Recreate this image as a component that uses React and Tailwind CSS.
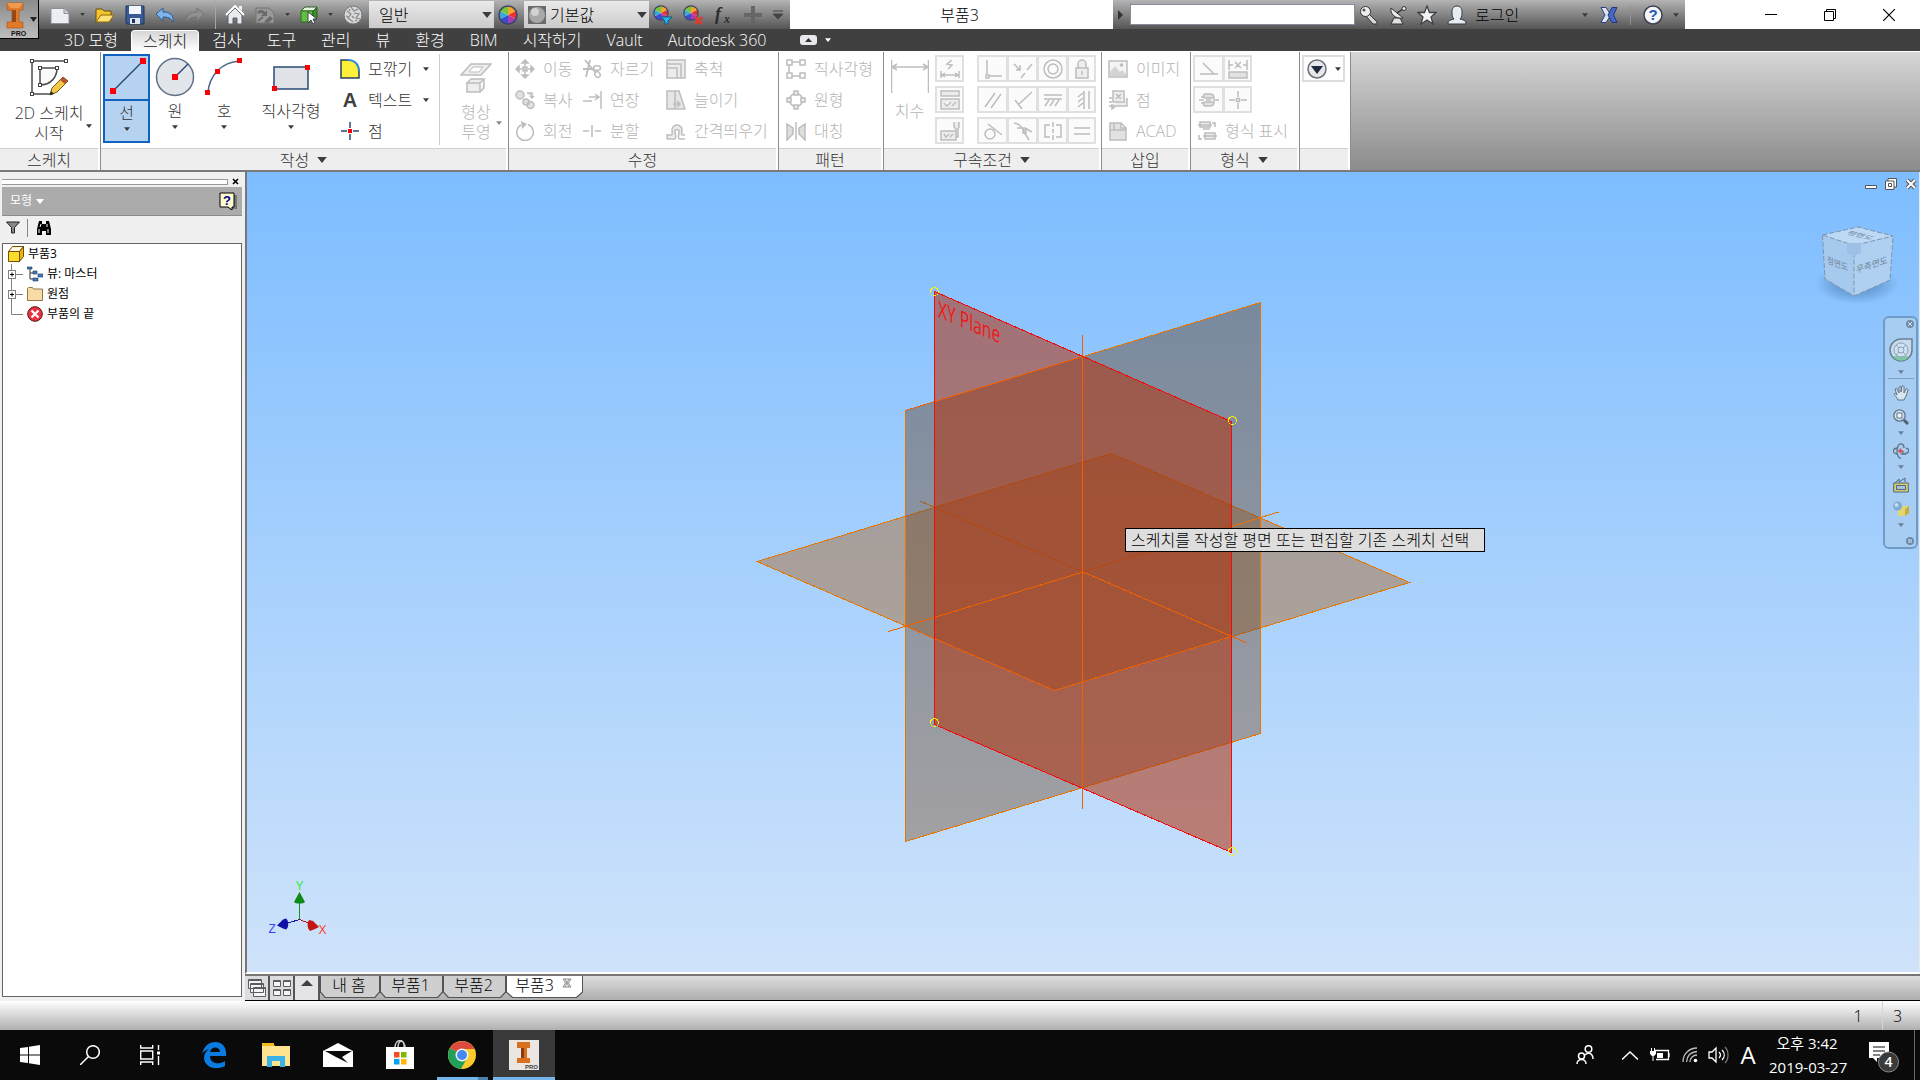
import React from 'react';

const Svg = ({ w = 20, h = w, box, className = '', children }) => (
  <svg width={w} height={h} viewBox={box || `0 0 ${w} ${h}`} fill="none" className={`shrink-0 ${className}`} aria-hidden="true">
    {children}
  </svg>
);

const Caret = ({ w = 6, color = '#3c3c3c', className = '' }) => (
  <Svg w={w} h={Math.ceil(w * 0.6)} box="0 0 8 5" className={className}>
    <path d="M0 0h8L4 5z" fill={color} />
  </Svg>
);

/* ---------- title bar icons ---------- */

const NewIcon = () => (
  <Svg>
    <path d="M1 3.500h13l5 5v10H1z" fill="#eceef1" stroke="#8c9097" />
    <path d="M14 3.500v5h5" fill="#cfd3d8" stroke="#8c9097" />
  </Svg>
);

const OpenIcon = () => (
  <Svg>
    <path d="M1 17V4h6l2 2h7v4" fill="#f4c430" stroke="#6b4e00" />
    <path d="M1 17l5-7h13l-5 7z" fill="#ffe178" stroke="#8a6700" />
  </Svg>
);

const SaveIcon = () => (
  <Svg>
    <path d="M1 1h18v18H2l-1-1z" fill="#3a5a94" stroke="#1e345e" />
    <path d="M4 1h12v8H4z" fill="#f3f6fa" />
    <path d="M5 13h10v6H5z" fill="#dfe4ea" />
    <path d="M7 14h3v4H7z" fill="#1e345e" />
  </Svg>
);

const UndoIcon = () => (
  <Svg>
    <path d="M1 9l7-6v4c7 0 11 3 10 10-2-4-5-5-10-5v4z" fill="#7db4ea" stroke="#2a5a98" />
  </Svg>
);

const RedoIcon = () => (
  <Svg>
    <path d="M19 9l-7-6v4C5 7 1 10 2 17c2-4 5-5 10-5v4z" fill="#8f8f8f" stroke="#747474" />
  </Svg>
);

const HomeIcon = () => (
  <Svg>
    <path d="M3 10v9h5v-6h4v6h5v-9l-7-7z" fill="#e8eaee" stroke="#5a5f68" />
    <path d="M1 10l9-9 9 9" stroke="#fff" strokeWidth="2" />
    <path d="M14 1h3v5l-3-3z" fill="#f3f3f3" />
  </Svg>
);

const UpdateIcon = () => (
  <Svg>
    <path d="M1 3h13l5 5v10H1z" fill="#9a9a9a" stroke="#727272" />
    <path d="M2 7a5 5 0 0 1 8 0l2-2v6H6l2-2a3 3 0 0 0-4 0zM9 17l6-6 3 3-5 4z" fill="#6a6a6a" />
    <path d="M3 16l5-4" stroke="#6a6a6a" strokeWidth="2" />
  </Svg>
);

const PickIcon = () => (
  <Svg w={18} h={20}>
    <path d="M1 6l4-4h12l-4 4z" fill="#e4f5df" stroke="#2d5c20" />
    <path d="M1 6h12v11H1z" fill="#62bf3f" stroke="#2d6b1c" />
    <path d="M13 6l4-4v11l-4 4z" fill="#3d8f24" stroke="#2d5c20" />
    <path d="M8 7v11l3-3 2 4 2-1-2-4h4z" fill="#fff" stroke="#3a3f55" />
  </Svg>
);

const SphereIcon = () => (
  <Svg>
    <circle cx="10" cy="10" r="9" fill="#d5d7d9" stroke="#777" />
    <path d="M4 6l4 3-3 4 5 4M8 2l3 4 4-2M11 8l5 1-3 4 4 1M9 11l2 2M3 11l2 1M12 16l2-1M6 4l1 2" stroke="#85888c" strokeWidth="1.200" />
  </Svg>
);

const Wheel = () => (
  <>
    <circle cx="10" cy="10" r="9" fill="#fff" />
    <path d="M10 10V1a9 9 0 0 1 8 5z" fill="#f6a52a" />
    <path d="M10 10l8-4a9 9 0 0 1 0 8z" fill="#e5352c" />
    <path d="M10 10l8 4a9 9 0 0 1-8 5z" fill="#a93bb5" />
    <path d="M10 10v9a9 9 0 0 1-8-5z" fill="#3a4fd0" />
    <path d="M10 10l-8 4a9 9 0 0 1 0-8z" fill="#37a8d8" />
    <path d="M10 10L2 6a9 9 0 0 1 8-5z" fill="#74c63c" />
    <circle cx="10" cy="10" r="9" stroke="#3a4468" strokeWidth="1.500" />
  </>
);

const WheelIcon = ({ badge }) => (
  <Svg>
    {badge ? <g transform="scale(.8)"><Wheel /></g> : <Wheel />}
    {badge === 'filter' && <path d="M8 12h11l-4 4v3h-3v-3z" fill="#25b4ea" stroke="#0b5c84" />}
    {badge === 'clear' && <path d="M12 12l7 7m0-7l-7 7" stroke="#e23a2c" strokeWidth="2.500" />}
  </Svg>
);

const FxIcon = () => (
  <Svg>
    <text x="2" y="15" fontFamily="Liberation Serif, serif" fontStyle="italic" fontWeight="700" fontSize="18" fill="#2c2c2c">f</text>
    <text x="11" y="18" fontFamily="Liberation Serif, serif" fontStyle="italic" fontWeight="700" fontSize="12" fill="#2c2c2c">x</text>
  </Svg>
);

const PlusIcon = () => (
  <Svg>
    <path d="M8 1h4v7h7v4h-7v7H8v-7H1V8h7z" fill="#666" />
  </Svg>
);

const KeyIcon = () => (
  <Svg>
    <path d="M10 9l8 8v2h-4l-7-8z" fill="#d9d9d9" stroke="#333" />
    <circle cx="6.500" cy="6.500" r="5" fill="#eee" stroke="#333" />
    <circle cx="5" cy="5" r="1.500" fill="#555" />
  </Svg>
);

const DishIcon = () => (
  <Svg w={18} h={20}>
    <path d="M5 13l-3 6h12l-3-6z" fill="#e2e2e2" stroke="#333" />
    <path d="M2 3c-1 6 4 11 12 10z" fill="#ececec" stroke="#333" />
    <path d="M8 8l6-4" stroke="#333" strokeWidth="1.500" />
    <circle cx="15" cy="3.500" r="2" fill="#eee" stroke="#333" />
  </Svg>
);

const StarIcon = () => (
  <Svg>
    <path d="M10 1l2.500 6.500H19l-5 4.500 2 7-6-4-6 4 2-7-5-4.500h6.500z" fill="#f2f2f2" stroke="#3d4148" strokeWidth="1.300" />
  </Svg>
);

const UserIcon = () => (
  <Svg>
    <path d="M1 19c0-4 3-4 6-5-2-2-2-4-2-7 0-4 2-6 5-6s5 2 5 6c0 3 0 5-2 7 3 1 6 1 6 5z" fill="#e8ecf2" stroke="#333a48" />
  </Svg>
);

const ExchangeIcon = () => (
  <Svg w={18} h={18}>
    <path d="M1 1.500h5l5 7.500-5 7.500H1L5 9z" fill="#dfe5f4" stroke="#2c3f7c" />
    <path d="M17 1.500h-5L8 9l4 7.500h5L13.500 9z" fill="#4468c4" stroke="#22387c" />
  </Svg>
);

const HelpIcon = () => (
  <Svg>
    <circle cx="10" cy="10" r="9" fill="#f2f4f8" stroke="#3b4254" strokeWidth="1.500" />
    <text x="10" y="15" textAnchor="middle" fontFamily="Liberation Sans, sans-serif" fontWeight="700" fontSize="15" fill="#2456b8">?</text>
  </Svg>
);

/* ---------- ribbon icons ---------- */

const dot = '#fb0007';
const line = '#2b4a75';
const dim = '#bdbdbd';

const Sketch2DIcon = () => (
  <Svg w={40}>
    <path d="M3 37V4h35M3 37h18" stroke="#4c4c4c" strokeWidth="1.500" />
    <path d="M11 28V11h17c0 9-6 17-17 17z" stroke="#4c4c4c" strokeWidth="1.500" fill="#fafafa" />
    {[[3, 4], [37, 4], [3, 37], [11, 11], [28, 11], [11, 28]].map(([x, y]) => (
      <rect key={`${x}-${y}`} x={x - 1.5} y={y - 1.5} width="3" height="3" fill="#fff" stroke="#444" />
    ))}
    <path d="M21 38l2-7 11-11 5 4-11 11z" fill="#f7c948" stroke="#6b5524" />
    <path d="M31 23l3-3 5 4-3 3z" fill="#b5532c" />
    <path d="M21 38l1-4 3 3z" fill="#222" />
  </Svg>
);

const LineIcon = () => (
  <Svg w={40}>
    <path d="M6 35L35 6" stroke={line} strokeWidth="1.500" />
    <path d="M3 32h6v6H3zM33 2h6v6h-6z" fill={dot} />
  </Svg>
);

const CircleIcon = () => (
  <Svg w={40}>
    <circle cx="20" cy="20" r="18.500" fill="#e2e5e9" stroke="#5d7088" strokeWidth="1.500" />
    <path d="M20 20L33 7" stroke={line} strokeWidth="1.500" />
    <path d="M17 17h6v6h-6z" fill={dot} />
  </Svg>
);

const ArcIcon = () => (
  <Svg w={40}>
    <path d="M4 36C5 19 17 5 36 4" stroke="#4b6485" strokeWidth="1.500" />
    <path d="M1 33h5v5H1zM11 12h5v5h-5zM33 1h5v5h-5z" fill={dot} />
  </Svg>
);

const RectIcon = () => (
  <Svg w={40}>
    <rect x="3" y="10" width="34" height="22" fill="#dfe3e8" stroke={line} strokeWidth="1.500" />
    <path d="M1 29h5v5H1zM34 8h5v5h-5z" fill={dot} />
  </Svg>
);

const FilletIcon = () => (
  <Svg>
    <path d="M1 1h7c7 0 11 5 11 11v7H1z" fill="#fdf03a" />
    <path d="M8 1H1v18h18v-7" stroke="#27405e" strokeWidth="1.500" />
    <path d="M8 1c7 0 11 5 11 11" stroke="#2f8be0" strokeWidth="2" />
  </Svg>
);

const TextIcon = () => (
  <span className="w-5 text-center text-xl leading-6 font-bold text-[#3f3f3f] [font-family:'Liberation_Sans',sans-serif]" aria-hidden="true">A</span>
);

const PointIcon = () => (
  <Svg>
    <path d="M10 1v6m0 6v6M1 10h6m6 0h6" stroke={line} strokeWidth="1.500" />
    <path d="M8 8h4v4H8z" fill={dot} />
  </Svg>
);

const ProjectIcon = () => (
  <Svg w={32} h={32}>
    <path d="M1 13L11 2h20L21 13z" fill="#eee" stroke={dim} strokeWidth="1.500" />
    <path d="M9 10l4-5h10l-4 5z" fill="#fff" stroke={dim} />
    <path d="M7 21l4-4h13l-4 4zM7 21h13v9H7zM20 30l4-4v-9" fill="#eee" stroke={dim} strokeWidth="1.500" />
  </Svg>
);

const G = ({ d, fill = 'none', children }) => (
  <Svg>
    <path d={d} stroke={dim} strokeWidth="1.500" fill={fill} />
    {children}
  </Svg>
);

const icons = {
  move: <G d="M8 8h4v4H8zM10 2v5M10 13v5M2 10h5M13 10h5M7 4l3-3 3 3zM7 16l3 3 3-3zM4 7l-3 3 3 3zM16 7l3 3-3 3z" fill="#c9c9c9" />,
  copy: <G d="M1 5a4 4 0 1 0 8 0a4 4 0 1 0-8 0M8 12a3 3 0 1 0 6 0a3 3 0 1 0-6 0M12 15a3.500 3.500 0 1 0 7 0a3.500 3.500 0 1 0-7 0M12 3h5v5M15 6l2 2 2-2" fill="#e0e0e0" />,
  rotate: (
    <Svg>
      <path d="M6 4a8.300 8.300 0 1 0 7-.5" stroke={dim} strokeWidth="1.500" />
      <path d="M6 0l6 3-5 5z" fill={dim} />
    </Svg>
  ),
  trim: (
    <Svg>
      <path d="M1 10h10M3 1l10 12M8 1L4 18" stroke={dim} strokeWidth="1.800" />
      <ellipse cx="15.500" cy="15.500" rx="2.500" ry="3" transform="rotate(-35 15.500 15.500)" stroke={dim} strokeWidth="1.500" />
      <ellipse cx="15" cy="9" rx="3.500" ry="2.300" stroke={dim} strokeWidth="1.500" />
    </Svg>
  ),
  extend: <G d="M1 11h9M7 7h9M13 4l4 3-4 3M19 1v18" />,
  split: <G d="M1 10h6M10 4v12M13 10h6" />,
  scale: <G d="M1 1h18v18h-8V9H1zM1 9h10v10H1zM1 9V5h14v14" fill="#ececec" />,
  stretch: <G d="M1 1h8v18H1zM9 1h4l6 18H9M7 14h7M11 11l3 3-3 3" fill="#e6e6e6" />,
  offset: (
    <Svg>
      <path d="M1 18v-4h4c2 0 1-3 1-5a5 5 0 0 1 10 0c0 2-1 5 1 5h2" stroke={dim} strokeWidth="1.500" fill="#ececec" />
      <path d="M1 18h7c3 0 1-5 1-8 0-2 4-2 4 0 0 3-2 8 1 8h5" stroke={dim} strokeWidth="1.500" fill="#fff" />
    </Svg>
  ),
  rectPattern: <G d="M1 1h5v5H1zM14 1h5v5h-5zM1 14h5v5H1zM14 14h5v5h-5zM6 3h8M3 6v8M6 17h8" />,
  circPattern: (
    <Svg>
      <circle cx="10" cy="10" r="6.500" stroke={dim} strokeWidth="1.500" />
      <path d="M8 1h4v4H8zM8 15h4v4H8zM1 8h4v4H1zM15 8h4v4h-4z" fill="#eee" stroke={dim} strokeWidth="1.500" />
    </Svg>
  ),
  mirror: <G d="M10 1v18M1 3l6 4v6l-6 6zM19 3l-6 4v6l6 6z" fill="#dedede" />,
  autoDim: <G d="M1 12v7M19 12v7M2 16h16M5 14l-3 2 3 2M15 14l3 2-3 2M12 1L7 5l5 1-4 4" />,
  showCon: <G d="M1 1h18v5H1zM1 9h18v10H1zM4 13l3 3 4-4M12 16l4-4" fill="#ececec" />,
  conSet: <G d="M1 10h15v9H1zM4 13l2 3 3-3M10 16l3-3M14 1v5l2 2v8h2V8l1-2V1" fill="#ececec" />,
  perp: <G d="M4 1v14M6 17h13M3 16h3v3H3z" />,
  collinear: <G d="M1 5l6 6M7 6v5H3M8 19l4-5M14 11l5-6" />,
  concentric: <Svg><circle cx="10" cy="10" r="9" stroke={dim} strokeWidth="1.500" /><circle cx="10" cy="10" r="5" stroke={dim} strokeWidth="1.500" /></Svg>,
  lock: <G d="M4 9h12v10H4zM6 9V5a4 4 0 0 1 8 0v4M10 12v4" fill="#eee" />,
  parallel: <G d="M2 17L12 3M8 18L18 4" />,
  perpend: <G d="M2 10l7 9M6 14L19 2" />,
  horiz: <G d="M1 5h18M1 9h18M6 10l-4 6M11 10l-4 6M16 10l-4 6" />,
  vert: <G d="M12 1v18M17 1v18M11 3L6 7M11 8l-5 4M11 13l-5 4" />,
  tangent: <Svg><circle cx="7" cy="13" r="5" stroke={dim} strokeWidth="1.500" /><path d="M5 3l14 11" stroke={dim} strokeWidth="1.500" /></Svg>,
  smooth: <G d="M1 2c7 1 9 5 10 9l5 8M4 7h8l7 4M10 9h3v3h-3z" />,
  symmetric: <G d="M7 4H2v12h5M13 4h5v12h-5M10 1v5M10 8v4M10 14v5" />,
  equal: <G d="M2 7h16M2 13h16" />,
  image: (
    <Svg>
      <path d="M1 2h18v16H1z" fill="#f4f4f4" stroke={dim} strokeWidth="1.500" />
      <path d="M2 17v-4l5-6 5 6 2-2 4 4v2z" fill="#d4d4d4" />
      <circle cx="13.500" cy="6" r="1.800" fill={dim} />
    </Svg>
  ),
  points: <G d="M5 1h11v11H5zM8 4l5 5M13 4l-5 5M1 8h3M1 12h3M1 16h18V8M4 14v5l3-2" fill="#ededed" />,
  acad: <G d="M2 2h11l5 5v12H2zM13 2v5h5M2 9h16M6 3v6" fill="#e2e2e2" />,
  construction: <G d="M1 15h18M4 4l11 11" />,
  driven: <G d="M1 1v10M19 1v10M1 6h4M15 6h4M7 3l6 6M13 3L7 9M1 13h18v6H1z" fill="#e2e2e2" />,
  centerline: (
    <Svg>
      <path d="M6 8c-2 0-2-4 0-4h5c3 0 4 2 4 4zM6 12c-2 0-2 4 0 4h5c3 0 4-2 4-4z" fill="#e0e0e0" stroke={dim} strokeWidth="1.500" />
      <path d="M0 10h5M7 10h5M14 10h6M2 7h3M2 13h3" stroke={dim} strokeWidth="1.500" />
    </Svg>
  ),
  centerpoint: <G d="M10 1v6M10 13v6M1 10h6M13 10h6M8.500 8.500h3v3h-3z" />,
  showFormat: <G d="M3 1h10v5H3zM8 12h10v6H8zM1 4h14M6 15h14M15 2h3v4M2 14v4h3M6 8h7" fill="#ececec" />,
};

/* ---------- ribbon building blocks ---------- */

const Panel = ({ title, more, width, children }) => (
  <section className={`${width} flex flex-col border-r border-[#8c8c8c] bg-white`}>
    <div className="flex h-24 pt-px">{children}</div>
    <h2 className="mr-0.5 flex flex-1 items-center justify-center gap-2 border-t border-[#d0d0d0] bg-[#eee] text-base leading-5">
      {title}
      {more && <Caret w={10} />}
    </h2>
  </section>
);

const Large = ({ icon, label, className = '' }) => (
  <button type="button" className={`flex flex-col items-center pt-1 ${className}`}>
    {icon}
    <span className="mt-1 leading-5">{label}</span>
    <Caret className="mt-1" />
  </button>
);

const Small = ({ icon, label, caret, off = true }) => (
  <button type="button" className={`flex h-[31px] items-center gap-2 whitespace-nowrap leading-5 ${off ? 'text-[#b4b4b4]' : 'text-[#333]'}`}>
    {icon}
    <span>{label}</span>
    {caret && <Caret className="ml-auto" />}
  </button>
);

const IconGrid = ({ names, cols, label }) => (
  <div className={`grid ${cols} content-start gap-y-1 pt-0.5`} role="group" aria-label={label}>
    {names.map((name) => (
      <button key={name} type="button" aria-label={name} className="-mr-px flex h-[27px] items-center justify-center border-2 border-[#e0e0e0] bg-[#fbfbfb]">
        {icons[name]}
      </button>
    ))}
  </div>
);

const TitleBar = () => (
  <header className="flex h-[29px] bg-white">
    <div className="flex shrink-0 items-center bg-linear-to-b from-[#b4b4b4] via-[#858585] to-[#555] pr-[7px] pl-[50px]">
      <div className="flex items-center gap-2.5 pr-1.5">
        <button type="button" aria-label="새로 만들기"><NewIcon /></button>
        <Caret w={5} />
        <button type="button" aria-label="열기"><OpenIcon /></button>
        <button type="button" aria-label="저장"><SaveIcon /></button>
        <button type="button" aria-label="명령 취소"><UndoIcon /></button>
        <button type="button" aria-label="명령 복구"><RedoIcon /></button>
        <span className="-mr-px h-7 w-px bg-[#a5a5a5]" />
        <button type="button" aria-label="홈"><HomeIcon /></button>
        <button type="button" aria-label="업데이트"><UpdateIcon /></button>
        <Caret w={5} />
        <button type="button" aria-label="선택"><PickIcon /></button>
        <Caret w={5} />
        <button type="button" aria-label="재질"><SphereIcon /></button>
      </div>
      <div className="relative flex h-[27px] w-[125px] items-center bg-linear-to-b from-[#eaeaea] to-[#cacaca]">
        <select aria-label="재질" className="h-full w-full appearance-none pl-2.5 text-base text-black">
          <option>일반</option>
        </select>
        <Caret w={10} className="pointer-events-none absolute right-[2px]" />
      </div>
      <button type="button" aria-label="모양" className="mr-1.5 ml-1"><WheelIcon /></button>
      <div className="relative flex h-[27px] w-[125px] items-center bg-linear-to-b from-[#eaeaea] to-[#cacaca] pl-1">
        <Svg w={18}>
          <path d="M0 0h18v18H0z" fill="#6b6b6b" />
          <circle cx="9" cy="9" r="8" fill="#a8a8a8" />
          <circle cx="7" cy="6" r="4" fill="#d2d2d2" />
        </Svg>
        <select aria-label="모양" className="h-full w-full appearance-none pl-1 text-base text-black">
          <option>기본값</option>
        </select>
        <Caret w={10} className="pointer-events-none absolute right-[2px]" />
      </div>
      <div className="flex items-center gap-2.5 pl-1">
        <button type="button" aria-label="조정"><WheelIcon badge="filter" /></button>
        <button type="button" aria-label="지우기"><WheelIcon badge="clear" /></button>
        <button type="button" aria-label="매개변수"><FxIcon /></button>
        <button type="button" aria-label="추가"><PlusIcon /></button>
        <Svg w={10}>
          <path d="M0 1h10M0 4h10l-5 5z" stroke="#444" fill="#444" />
        </Svg>
      </div>
    </div>

    <h1 className="flex flex-1 items-center justify-center pl-4 text-base text-black">부품3</h1>

    <div className="flex w-[572px] shrink-0 items-center bg-linear-to-b from-[#b4b4b4] via-[#858585] to-[#555] pl-[5px]">
      <Svg w={6} h={10}><path d="M0 0v10l5-5z" fill="#333" /></Svg>
      <input type="text" aria-label="검색" className="mr-1 ml-1.5 h-[21px] w-[225px] border border-[#8b8ba0] bg-white px-1" />
      <div className="flex items-center gap-2.5">
        <button type="button" aria-label="키"><KeyIcon /></button>
        <button type="button" aria-label="통신 센터"><DishIcon /></button>
        <button type="button" aria-label="즐겨찾기"><StarIcon /></button>
        <button type="button" className="flex items-center gap-2 text-base text-black">
          <UserIcon />
          로그인
        </button>
      </div>
      <Caret className="ml-auto" />
      <button type="button" aria-label="교환" className="ml-3"><ExchangeIcon /></button>
      <span className="mx-3 h-5 w-px bg-[#8f8f8f]" />
      <button type="button" aria-label="도움말"><HelpIcon /></button>
      <Caret className="mr-1.5 ml-2.5" />
    </div>

    <div className="flex w-[235px] shrink-0 items-center justify-end pr-0.5">
      <button type="button" aria-label="최소화" className="flex w-[59px] justify-center">
        <Svg w={12}><path d="M0 5.500h12" stroke="#000" /></Svg>
      </button>
      <button type="button" aria-label="복원" className="flex w-[59px] justify-center">
        <Svg w={12}><path d="M.5 2.500h9v9h-9zM2.500 2V.5h9v9H10" stroke="#000" /></Svg>
      </button>
      <button type="button" aria-label="닫기" className="flex w-[59px] justify-center">
        <Svg w={12}><path d="M0 0l12 12M12 0L0 12" stroke="#000" strokeWidth="1.200" /></Svg>
      </button>
    </div>
  </header>
);

const menuTabs = ['3D 모형', '스케치', '검사', '도구', '관리', '뷰', '환경', 'BIM', '시작하기', 'Vault', 'Autodesk 360'];

const MenuTabs = () => (
  <nav className="flex h-[22px] gap-px bg-[#404040] pl-[52px] text-base text-white">
    {menuTabs.map((tab) => (
      <button
        key={tab}
        type="button"
        className={tab === '스케치'
          ? 'mt-px rounded-t-sm border border-b-0 border-white bg-linear-to-b from-[#d6d6d6] to-white px-[11px] leading-[18px] text-[#222]'
          : 'px-3 leading-5'}
      >
        {tab}
      </button>
    ))}
    <button type="button" aria-label="리본 최소화" className="ml-5 flex items-center gap-2">
      <Svg w={17} h={10}>
        <rect width="17" height="10" rx="3" fill="#e6e8ec" />
        <path d="M5 7h7L8.500 3z" fill="#333" />
      </Svg>
      <Caret color="#fff" />
    </button>
  </nav>
);

const Ribbon = () => (
  <div className="flex h-[121px] border-t border-b-2 border-t-white border-b-[#7a7a7a] bg-linear-to-b from-[#d6d6d6] to-[#8c8c8c] text-base text-[#333]">
    <Panel title="스케치" width="w-[101px]">
      <button type="button" className="relative flex flex-1 flex-col items-center pt-1 pr-0.5">
        <Sketch2DIcon />
        <span className="mt-1.5 block leading-5">2D 스케치</span>
        <span className="block leading-5">시작</span>
        <Caret className="absolute right-2 bottom-5" />
      </button>
    </Panel>

    <Panel title="작성" more width="w-[408px]">
      <button type="button" className="mt-px ml-0.5 flex h-[89px] w-[47px] flex-col items-center border-2 border-[#0f63bd] bg-[#b5d3f0]">
        <span className="flex h-[45px] w-full justify-center border-b-2 border-[#0f63bd]"><LineIcon /></span>
        <span className="mt-0.5 leading-5">선</span>
        <Caret className="mt-1" />
      </button>
      <Large icon={<CircleIcon />} label="원" className="w-[50px]" />
      <Large icon={<ArcIcon />} label="호" className="w-[48px]" />
      <Large icon={<RectIcon />} label="직사각형" className="w-[86px]" />
      <div className="ml-1.5 flex w-[89px] flex-col">
        <Small off={false} icon={<FilletIcon />} label="모깎기" caret />
        <Small off={false} icon={<TextIcon />} label="텍스트" caret />
        <Small off={false} icon={<PointIcon />} label="점" />
      </div>
      <div className="mt-px ml-2.5 flex h-[91px] flex-1 border-l border-[#ccc]">
        <button type="button" className="relative flex flex-1 flex-col items-center pt-2 pl-1 text-[#b4b4b4]">
          <ProjectIcon />
          <span className="mt-2 block leading-5">형상</span>
          <span className="block leading-5">투영</span>
          <Caret color="#8c8c8c" className="absolute right-1.5 bottom-5" />
        </button>
      </div>
    </Panel>

    <Panel title="수정" width="w-[270px]">
      <div className="grid grid-cols-[67px_84px_1fr] content-start pl-1.5">
        <Small icon={icons.move} label="이동" />
        <Small icon={icons.trim} label="자르기" />
        <Small icon={icons.scale} label="축척" />
        <Small icon={icons.copy} label="복사" />
        <Small icon={icons.extend} label="연장" />
        <Small icon={icons.stretch} label="늘이기" />
        <Small icon={icons.rotate} label="회전" />
        <Small icon={icons.split} label="분할" />
        <Small icon={icons.offset} label="간격띄우기" />
      </div>
    </Panel>

    <Panel title="패턴" width="w-[105px]">
      <div className="flex flex-col pl-[7px]">
        <Small icon={icons.rectPattern} label="직사각형" />
        <Small icon={icons.circPattern} label="원형" />
        <Small icon={icons.mirror} label="대칭" />
      </div>
    </Panel>

    <Panel title="구속조건" more width="w-[218px]">
      <button type="button" className="flex w-[51px] flex-col items-center pt-1.5 text-[#b4b4b4]">
        <Svg w={38} h={34}>
          <path d="M.5 1v33M37.500 1v33M1 8h36M6 5L1 8l5 3M32 5l5 3-5 3" stroke={dim} strokeWidth="1.500" />
        </Svg>
        <span className="mt-2 leading-5">치수</span>
      </button>
      <IconGrid label="구속조건 설정" cols="grid-cols-[28px]" names={['autoDim', 'showCon', 'conSet']} />
      <div className="w-3.5" />
      <IconGrid
        label="구속조건"
        cols="grid-cols-[30px_30px_30px_28px]"
        names={['perp', 'collinear', 'concentric', 'lock', 'parallel', 'perpend', 'horiz', 'vert', 'tangent', 'smooth', 'symmetric', 'equal']}
      />
    </Panel>

    <Panel title="삽입" width="w-[89px]">
      <div className="flex flex-col pl-1.5">
        <Small icon={icons.image} label="이미지" />
        <Small icon={icons.points} label="점" />
        <Small icon={icons.acad} label="ACAD" />
      </div>
    </Panel>

    <Panel title="형식" more width="w-[109px]">
      <div className="flex flex-col pl-0.5">
        <IconGrid label="형식" cols="grid-cols-[30px_28px]" names={['construction', 'driven', 'centerline', 'centerpoint']} />
        <div className="pt-0.5 pl-1"><Small icon={icons.showFormat} label="형식 표시" /></div>
      </div>
    </Panel>

    <Panel width="w-[51px]">
      <button type="button" aria-label="마무리" className="mt-0.5 ml-0.5 flex h-[27px] w-[43px] items-center justify-center gap-2 border-2 border-[#ddd]">
        <Svg w={20}>
          <circle cx="10" cy="10" r="9" fill="#e6e8eb" stroke="#6c7077" strokeWidth="1.500" />
          <path d="M4 7h12l-6 8z" fill="#202a3c" />
        </Svg>
        <Caret />
      </button>
    </Panel>
  </div>
);

/* ---------- model browser ---------- */

const treeItems = [
  {
    label: '뷰: 마스터',
    expandable: true,
    icon: (
      <Svg w={16}>
        <path d="M3 3v10h3M3 7h4" stroke="#333" />
        <path d="M0 1h5v2H0zM6 5h4v3H6zM11 8h5v3h-5zM6 12h5v3H6z" fill="#3f7fc0" stroke="#1c3450" strokeWidth=".6" />
      </Svg>
    ),
  },
  {
    label: '원점',
    expandable: true,
    icon: (
      <Svg w={16}>
        <path d="M.5 14.500V2.500l1-1h4l1 1.500h9v11.500z" fill="#f7dca6" stroke="#94744a" />
      </Svg>
    ),
  },
  {
    label: '부품의 끝',
    icon: (
      <Svg w={16}>
        <circle cx="8" cy="8" r="7.300" fill="#ec3340" stroke="#4e1216" />
        <path d="M4.500 4.500l7 7m0-7l-7 7" stroke="#fff" strokeWidth="2.200" />
      </Svg>
    ),
  },
];

const ModelBrowser = () => (
  <aside className="flex w-[245px] shrink-0 flex-col bg-[#f0f0f0] pt-1 pr-[3px] pb-1 pl-0.5 text-xs font-normal text-black">
    <div className="flex h-[11px] items-center gap-1">
      <span className="h-1.5 w-[226px] border-y border-r border-[#999] bg-white" />
      <button type="button" aria-label="패널 닫기">
        <Svg w={7}><path d="M1 1l5 5M6 1L1 6" stroke="#000" strokeWidth="1.600" /></Svg>
      </button>
    </div>
    <div className="flex h-[29px] items-center justify-between border-b border-[#8c8c8c] bg-[#ababab] pr-[5px] pl-2">
      <button type="button" className="flex items-center gap-1 text-white">
        모형
        <Caret w={8} color="#fff" />
      </button>
      <button type="button" aria-label="도움말">
        <Svg w={18}>
          <path d="M3 3h15v14h-5l-2 1z" fill="#777" />
          <path d="M1 1h14v14h-2v3l-4-3H1z" fill="#fffbd0" stroke="#000" />
          <text x="8" y="13" textAnchor="middle" fontFamily="Liberation Sans, sans-serif" fontWeight="700" fontSize="13" fill="#00008b">?</text>
        </Svg>
      </button>
    </div>
    <div className="flex h-[27px] items-center pb-1 pl-1">
      <button type="button" aria-label="필터">
        <Svg w={14} h={13}><path d="M.5 1h13L8.500 6.500V12h-3V6.500z" fill="#8a8a8a" stroke="#222" /></Svg>
      </button>
      <span className="mr-2 ml-[7px] h-[18px] w-px bg-[#888]" />
      <button type="button" aria-label="찾기">
        <Svg w={16} h={14}>
          <path d="M3 0h3v3h4V0h3l2 8v6h-5v-4H6v4H1V8z" fill="#000" />
          <path d="M3 8v4M12 8v4M5 3L4 6M11 3v3" stroke="#fff" />
        </Svg>
      </button>
    </div>
    <div className="flex-1 border border-[#646464] bg-white pl-[5px]">
      <div className="flex h-5 items-center gap-1">
        <Svg w={16}>
          <path d="M.5 5.500l4-5h11l-4 5z" fill="#fffbe0" stroke="#7a4a00" />
          <path d="M.5 5.500h11v10H.5z" fill="#f9dc2c" stroke="#7a4a00" />
          <path d="M11.500 5.500l4-5v10l-4 5z" fill="#e5b70b" stroke="#7a4a00" />
        </Svg>
        부품3
      </div>
      <ul>
        {treeItems.map(({ label, icon, expandable }, i) => (
          <li key={label} className="flex h-5 items-center gap-1">
            <Svg w={15} h={20} box="0 0 15 20">
              <path d={i === treeItems.length - 1 ? 'M3.500 0v10.500H15' : 'M3.500 0v20M3.500 10.500H15'} stroke="#808080" />
              {expandable && (
                <>
                  <rect x=".5" y="6.500" width="7" height="8" fill="#fff" stroke="#808080" />
                  <path d="M2 10.500h4M4 8.500v4" stroke="#000" />
                </>
              )}
            </Svg>
            {icon}
            {label}
          </li>
        ))}
      </ul>
    </div>
  </aside>
);

/* ---------- graphics window ---------- */

const OriginPlanes = () => (
  <svg className="absolute inset-0 h-full w-full" viewBox="247 172 1672 800" fill="none" role="img" aria-label="원점 평면">
    <defs>
      <linearGradient id="yz" x1="0" y1="0" x2="0" y2="1">
        <stop offset="0" stopColor="#64452c" />
        <stop offset="1" stopColor="#7b593b" />
      </linearGradient>
    </defs>

    <g shapeRendering="crispEdges">
      <path d="M757 561.500L1111.500 453.500 1409.500 582.500 1054.500 690.500z" fill="#ab703a" fillOpacity=".5" stroke="#e87500" />
      <path d="M920 501L1083 572M1083 572L1278.500 512" stroke="#e87500" />
      <path d="M905.500 410.500L1260.500 302.500V733.500L905.500 841.500z" fill="url(#yz)" fillOpacity=".46" stroke="#e87500" />
      <path d="M934.500 291.500L1231.500 421.500V852.500L934.500 724.500z" fill="#b23410" fillOpacity=".57" />

      {/* edges and axes in front of the selected plane */}
      <path d="M905.500 410.500L1082.500 356.500M905.500 626L1054.500 690.500 1231.500 636.500M1082.500 335V809M888.500 631.500L1083 572 1247 643" stroke="#ee6000" />
      <path d="M1231.500 526.500L1278.500 512" stroke="#e87500" />
      <path d="M934.500 291.500L1231.500 421.500V852.500L934.500 724.500z" stroke="#f80808" />
      <g stroke="#fff200">
        <circle cx="934.500" cy="291.500" r="4" />
        <circle cx="1232.500" cy="420.500" r="4" />
        <circle cx="934.500" cy="722.500" r="4" />
        <circle cx="1232.500" cy="851.500" r="4" />
      </g>
    </g>
    {/* label lies in the plane, so it follows the plane's projection */}
    <text transform="matrix(.68 .29 0 1 938 317)" fontFamily="Open Sans, sans-serif" fontWeight="400" fontSize="23" fill="#f01818">XY Plane</text>

    {/* axis triad */}
    <g shapeRendering="crispEdges">
      <path d="M299.500 919.500V900" stroke="#0f9a1c" />
      <path d="M299.500 919.500L288 923" stroke="#1818a0" />
      <path d="M299.500 919.500L311 924" stroke="#b01818" />
    </g>
    <path d="M299.500 892l5.500 10c-2 2-9 2-11 0z" fill="#0c8a14" />
    <path d="M277 925.500l6-6 3-1c3 2 3 9 0 11l-3-1z" fill="#1111a8" />
    <path d="M319 927l-6-6-4-1c-2 3-2 8 1 11l5-2z" fill="#c41414" />
    <g fontFamily="Liberation Sans, sans-serif" fontWeight="400" fontSize="12">
      <text x="295.500" y="890" fill="#2cee3c">Y</text>
      <text x="268.500" y="932.500" fill="#3c3cff">Z</text>
      <text x="318.500" y="934" fill="#ff3838">X</text>
    </g>
  </svg>
);

const ViewCube = () => (
  <svg width="90" height="90" viewBox="1810 220 90 90" className="absolute top-12 right-[19px]" fill="none" role="img" aria-label="뷰 큐브">
    <defs>
      <radialGradient id="shadow">
        <stop offset="0" stopColor="#3f6fa5" stopOpacity=".8" />
        <stop offset="1" stopColor="#3f6fa5" stopOpacity="0" />
      </radialGradient>
    </defs>
    <ellipse cx="1857" cy="284" rx="42" ry="20" fill="url(#shadow)" />
    <path d="M1822.500 235L1858 227l35 9-39 9.500z" fill="#bcdaf6" />
    <path d="M1822.500 235l31.500 10.500V296l-29-17z" fill="#a6caee" />
    <path d="M1893 236l-39 9.500V296l36-16z" fill="#afd0f1" />
    <path d="M1822.500 235L1858 227l35 9-39 9.500zM1822.500 235l2.500 44 29 17 36-16 3-44M1854 245.500V296" stroke="#8094aa" strokeDasharray="5 2" />
    <path d="M1847 243h14v10l-7 3-7-3z" fill="#9cc0e6" />
    <g fontFamily="Noto Sans CJK KR, sans-serif" fontSize="9" fontWeight="500" fill="#7b90a8">
      <text transform="matrix(.85 .32 0 1 1827 263)">정면도</text>
      <text transform="matrix(.95 -.3 0 1 1856 273)">우측면도</text>
      <text transform="matrix(1 .25 -.6 .5 1846 234)">평면도</text>
    </g>
  </svg>
);

const NavCaret = () => <Caret color="#6b8196" />;

const NavBar = () => (
  <div className="absolute top-36 right-px flex h-[233px] w-[35px] flex-col items-center rounded-md border-2 border-[#6f9bc9] bg-[#a8cdf2] pt-0.5" role="toolbar" aria-label="탐색 막대">
    <button type="button" aria-label="탐색 막대 닫기" className="mr-0.5 self-end">
      <Svg w={8}><circle cx="4" cy="4" r="4" fill="#6d8aa8" /><path d="M2 2l4 4M6 2L2 6" stroke="#d5e5f5" /></Svg>
    </button>
    <button type="button" aria-label="탐색 휠" className="mt-2.5">
      <Svg w={24}>
        <path d="M12 1h11v11A11 11 0 1 1 12 1z" fill="#c8dbec" stroke="#6a8096" strokeWidth="1.500" />
        <path d="M4 18h16c-4 6-12 6-16 0z" fill="#7cc9a4" />
        <circle cx="12" cy="12" r="7" fill="#cfe0f0" stroke="#8aa3ba" />
        <path d="M7 7l10 10M17 7L7 17" stroke="#8aa3ba" />
        <circle cx="12" cy="12" r="3" fill="#cfe0f0" stroke="#8aa3ba" />
      </Svg>
    </button>
    <span className="mt-2"><NavCaret /></span>
    <span className="mt-1 h-px w-[26px] bg-[#7f9fc0]" />
    <button type="button" aria-label="초점이동" className="mt-1.5">
      <Svg w={16}><path d="M5 15c-1-3-3-4-4-6 1-1 2-1 3 1L2 4c1-1 2-1 2 0l2 4V2c1-1 2-1 2 0v5l1-6c1-1 2 0 2 1v6l2-4c1-1 2 0 2 1l-2 6-2 4z" fill="#d8e4ef" stroke="#5f7488" /></Svg>
    </button>
    <button type="button" aria-label="줌" className="mt-2">
      <Svg w={16}><circle cx="6.500" cy="6.500" r="5.700" fill="#cfe0f0" stroke="#5f7488" strokeWidth="1.300" /><path d="M4 4h5v5H4z" fill="#eef4fa" stroke="#5f7488" /><path d="M11 11l4 4" stroke="#4f6070" strokeWidth="3" /></Svg>
    </button>
    <span className="mt-1.5"><NavCaret /></span>
    <button type="button" aria-label="회전" className="mt-2">
      <Svg w={16}><path d="M8 15c-2 1-4-3-4-7s2-8 4-7c2 0 3 2 3 4M4 5c-5 1-5 5 0 6M8 11h3c6-1 6-5 2-6M10 8v3h3" stroke="#5f7488" strokeWidth="1.300" /><path d="M5 8h5M7.500 5.500v5" stroke="#e14040" strokeWidth="1.500" /></Svg>
    </button>
    <span className="mt-1.5"><NavCaret /></span>
    <button type="button" aria-label="면 보기" className="mt-2">
      <Svg w={16}><path d="M1 7l5-5v3l6-4v4" stroke="#4f6784" /><path d="M.7 6h14.600v9H.7z" fill="#d8cd66" stroke="#4f6784" /><path d="M3.500 8.500h9v4h-9z" fill="#a8c2dc" stroke="#4f6784" /></Svg>
    </button>
    <button type="button" aria-label="비주얼 스타일" className="mt-2">
      <Svg w={16}><path d="M5 8l3-3h8l-4 3zM5 8h7v7H5z" fill="#e3d672" /><path d="M12 8l4-3v7l-4 3z" fill="#c4ae3c" /><circle cx="4.500" cy="5" r="4.500" fill="#7fa9d8" /><circle cx="3.500" cy="4" r="2" fill="#c3dbf3" /></Svg>
    </button>
    <span className="mt-1.5"><NavCaret /></span>
    <button type="button" aria-label="사용자화" className="mt-auto mr-0.5 mb-0.5 self-end">
      <Svg w={8}><circle cx="4" cy="4" r="4" fill="#6d8aa8" /><path d="M2 3h4M2 5h4" stroke="#d5e5f5" /></Svg>
    </button>
  </div>
);

const docTabs = ['내 홈', '부품1', '부품2', '부품3'];

const DocumentTabs = () => (
  <div className="flex h-[27px] border-t-2 border-t-[#777] border-b border-b-black bg-linear-to-b from-[#dedede] to-[#aeaeae]">
    <div className="flex gap-0.5 bg-[#555] pr-0.5">
      <button type="button" aria-label="계단식" className="flex w-[23px] items-center justify-center bg-[#dcdcde]">
        <Svg w={20}>
          <path d="M1.500 1.500h13v9h-13zM3.500 5.500h13v9h-13zM6.500 9.500h12v9h-12z" fill="#f4f4f6" stroke="#5c5c60" />
          <path d="M1 2.500h14M3 6.500h14M6 10.500h13" stroke="#5c5c60" />
        </Svg>
      </button>
      <button type="button" aria-label="바둑판식" className="flex w-[23px] items-center justify-center bg-[#dcdcde]">
        <Svg w={20} h={18}>
          <path d="M1.500 1.500h7v6h-7zM11.500 1.500h7v6h-7zM1.500 10.500h7v6h-7zM11.500 10.500h7v6h-7z" fill="#f4f4f6" stroke="#5c5c60" />
          <path d="M1 2.500h8M11 2.500h8M1 11.500h8M11 11.500h8" stroke="#5c5c60" />
        </Svg>
      </button>
      <button type="button" aria-label="탭 메뉴" className="flex w-[23px] justify-center bg-[#e4e4e6] pt-1">
        <Svg w={12} h={6}><path d="M0 6h12L6 0z" fill="#3f3f42" /></Svg>
      </button>
    </div>
    {docTabs.map((tab, i) => {
      const active = i === docTabs.length - 1;
      return (
        <button
          key={tab}
          type="button"
          className={`${active ? 'w-[77px]' : i === 0 ? 'w-[60px]' : 'w-[63px]'} h-[22px] bg-[#555] px-px pb-px text-base text-black [clip-path:polygon(0_0,100%_0,100%_75%,92%_100%,8%_100%,0_75%)]`}
        >
          <span className={`flex h-full items-center justify-center gap-2 pr-0.5 pb-1 [clip-path:polygon(0_0,100%_0,100%_75%,92%_100%,8%_100%,0_75%)] ${active ? 'bg-white' : 'bg-[#cfcfcf]'}`}>
            {tab}
            {active && (
              <Svg w={10} className="mb-1"><path d="M1 1h8L6.500 5 9 9H1l2.500-4zM3 1l4 8M7 1L3 9" stroke="#8a8a8a" /></Svg>
            )}
          </span>
        </button>
      );
    })}
  </div>
);

const GraphicsWindow = () => (
  <main className="flex min-w-0 flex-1 flex-col">
    <div className="relative flex-1 overflow-hidden border-r border-b-2 border-l-2 border-r-[#e8e8e8] border-b-white border-l-[#777] bg-linear-to-b from-[#7dbdff] to-[#cfe3fa]">
      <OriginPlanes />
      <div className="absolute top-[6px] right-0.5 flex items-center gap-2">
        <button type="button" aria-label="문서 최소화">
          <Svg w={12}><path d="M.5 7.500h11v3H.5z" fill="#fff" stroke="#555" /></Svg>
        </button>
        <button type="button" aria-label="문서 복원">
          <Svg w={12}><path d="M3 .5h8.500V9H9v2.500H.5V3H3z" fill="#fff" stroke="#555" /><path d="M3.500 5.500h3v3h-3zM3 3h6v6" stroke="#555" /></Svg>
        </button>
        <button type="button" aria-label="문서 닫기">
          <Svg w={12}><path d="M2 2l8 8M10 2l-8 8" stroke="#555" strokeWidth="4" /><path d="M2 2l8 8M10 2l-8 8" stroke="#fff" strokeWidth="2" /></Svg>
        </button>
      </div>
      <ViewCube />
      <NavBar />
      <div role="tooltip" className="absolute top-[356px] left-[878px] h-6 min-w-[360px] border border-black bg-[#dedede] px-[5px] text-base leading-[22px] whitespace-nowrap text-black">
        스케치를 작성할 평면 또는 편집할 기존 스케치 선택
      </div>
    </div>
    <DocumentTabs />
  </main>
);

/* ---------- windows taskbar ---------- */

const Taskbar = () => (
  <footer className="flex h-[50px] items-stretch bg-[#0a0a0a] text-white">
    <div className="flex pr-[3px]">
      <button type="button" aria-label="시작" className="flex w-[60px] items-center justify-center">
        <Svg w={20}><path d="M0 3l8-1v7.500H0zM9 1.800L20 0v9.500H9zM0 10.500h8V18l-8-1zM9 10.500h11V20L9 18.200z" fill="#fff" /></Svg>
      </button>
      <button type="button" aria-label="검색" className="flex w-[60px] items-center justify-center">
        <Svg w={20}><circle cx="13" cy="7" r="6.300" stroke="#fff" strokeWidth="1.500" /><path d="M8.500 11.500L0 20" stroke="#fff" strokeWidth="1.500" /></Svg>
      </button>
      <button type="button" aria-label="작업 보기" className="flex w-[60px] items-center justify-center">
        <Svg w={20}><path d="M.7 0v3h12V0M.7 20v-3h12v3M.7 6h12v8H.7zM18.500 0v5M18.500 11v9" stroke="#fff" strokeWidth="1.400" /><path d="M17 6.500h3v3h-3z" fill="#fff" /></Svg>
      </button>
    </div>
    <button type="button" aria-label="Edge" className="flex w-[62px] items-center justify-center">
      <Svg w={26}>
        <path d="M1 12C3 4 8 0 14 0c8 0 12 6 11 14H9c0 8 9 9 15 5v5c-7 4-20 3-21-8 0-4 2-7 5-9-4 1-6 3-7 5zm8-2h10c0-6-9-6-10 0z" fill="#0a7be0" />
      </Svg>
    </button>
    <button type="button" aria-label="파일 탐색기" className="flex w-[62px] items-center justify-center">
      <Svg w={28} h={26}>
        <path d="M0 2h11l2 2h15v20H0z" fill="#ffe490" />
        <path d="M0 1h12v3H0z" fill="#f5b921" />
        <path d="M5 14h18v11h-5v-6h-8v6H5z" fill="#38b2e8" />
      </Svg>
    </button>
    <button type="button" aria-label="메일" className="flex w-[62px] items-center justify-center">
      <Svg w={30} h={26}>
        <path d="M0 9L15 1l15 8v16H0z" fill="#fff" />
        <path d="M2 9h27l-10 6 6 6-12-6z" fill="#0a0a0a" />
      </Svg>
    </button>
    <button type="button" aria-label="스토어" className="flex w-[62px] items-center justify-center">
      <Svg w={28} h={30}>
        <path d="M9 8c0-10 10-10 10 0M12 7c0-8 7-7 6 0" stroke="#ccc" strokeWidth="1.500" />
        <path d="M0 7h28v22H0z" fill="#fff" />
        <path d="M8 12h5.500v5.500H8z" fill="#f25022" />
        <path d="M15 12h5.500v5.500H15z" fill="#7fba00" />
        <path d="M8 19h5.500v5.500H8z" fill="#00a4ef" />
        <path d="M15 19h5.500v5.500H15z" fill="#ffb900" />
      </Svg>
    </button>
    <button type="button" aria-label="Chrome" className="flex w-[62px] flex-col items-center justify-end">
      <Svg w={28} className="mb-[8px]">
        <circle cx="14" cy="14" r="14" fill="#fbcb2d" />
        <path d="M14 14L2 7a14 14 0 0 1 24.500 1H14z" fill="#dd4b3e" />
        <path d="M14 14L2 7a14 14 0 0 0 11 21l6-11z" fill="#1fa05b" />
        <circle cx="14" cy="14" r="6.500" fill="#f4f4f4" />
        <circle cx="14" cy="14" r="5" fill="#4488f2" />
      </Svg>
      <span className="flex h-[3px] w-[51px] bg-[#76b4ec]"><span className="ml-auto w-2.5 bg-[#4f7fac]" /></span>
    </button>
    <button type="button" aria-label="Inventor" className="flex w-[62px] flex-col items-center justify-end bg-[#3a3a3a]">
      <Svg w={30} className="mb-[7px]">
        <path d="M0 0h30v30H0z" fill="#ece6e2" />
        <path d="M8 2h13v6h-3v10h3v5H8v-5h4V8H8z" fill="#d9701f" />
        <path d="M12 8h3v10h-3z" fill="#8a3b0c" />
        <text x="16" y="29" fontFamily="Liberation Sans, sans-serif" fontWeight="700" fontSize="6" fill="#444">PRO</text>
      </Svg>
      <span className="h-[3px] w-full bg-[#76b4ec]" />
    </button>

    <div className="ml-auto flex items-center pr-[5px]">
      <button type="button" aria-label="사람" className="mr-7">
        <Svg w={18} h={20}><circle cx="12.500" cy="4" r="3.300" stroke="#fff" strokeWidth="1.500" /><circle cx="5.500" cy="11" r="3" stroke="#fff" strokeWidth="1.500" /><path d="M1 19c0-6 9-6 9 0M9 10c3-3 8-2 8 4" stroke="#fff" strokeWidth="1.500" /></Svg>
      </button>
      <button type="button" aria-label="숨겨진 아이콘" className="mr-3">
        <Svg w={16} h={9}><path d="M0 8.500L8 1l8 7.500" stroke="#fff" strokeWidth="1.500" /></Svg>
      </button>
      <Svg w={20} h={14} className="mr-3">
        <path d="M4.500 2.500h14v9H6M19 5v4" stroke="#fff" strokeWidth="1.300" />
        <path d="M7 5h6v5H7zM0 3h6v3L4 8H2L0 6z" fill="#fff" />
        <path d="M1.500 0v3M4.500 0v3M3 8v5" stroke="#fff" />
      </Svg>
      <Svg w={16} className="mr-2.5">
        <path d="M1 15C1 7 7 1 15 1M4.500 15C5 9 9 5 15 4.500M8 15c0-4 3-7 7-7" stroke="#bbb" strokeWidth="1.300" />
        <circle cx="13.500" cy="13.500" r="1.800" fill="#fff" />
      </Svg>
      <Svg w={21} h={18} className="mr-2.5">
        <path d="M1 6h3l4-4v14l-4-4H1z" stroke="#fff" strokeWidth="1.300" />
        <path d="M11 6c2 2 2 4 0 6M14 4c3 3 3 7 0 10" stroke="#fff" strokeWidth="1.300" />
        <path d="M17 1c4 4 4 12 0 16" stroke="#777" strokeWidth="1.300" />
      </Svg>
      <span className="w-[18px] text-center text-2xl leading-7 font-normal">A</span>
      <time className="ml-3 flex w-20 flex-col pr-1 text-center text-[15px] leading-6 font-normal whitespace-nowrap">
        <span>오후 3:42</span>
        <span>2019-03-27</span>
      </time>
      <button type="button" aria-label="알림" className="ml-5 pt-1">
        <Svg w={30} h={31}>
          <path d="M0 0h20v16H8v4l-4-4H0z" fill="#fff" />
          <path d="M4 5h12M4 9h12M4 13h7" stroke="#0a0a0a" />
          <circle cx="19.500" cy="20" r="10" fill="#3a3a3a" stroke="#888" />
          <text x="19.500" y="25" textAnchor="middle" fontFamily="Open Sans, sans-serif" fontWeight="600" fontSize="14" fill="#fff">4</text>
        </Svg>
      </button>
      <span className="ml-[15px] h-[50px] w-px bg-[#666]" />
    </div>
  </footer>
);

export default function App() {
  return (
    <div className="relative flex h-screen flex-col overflow-hidden bg-[#f0f0f0] font-light [font-family:'Open_Sans','Noto_Sans_CJK_KR',sans-serif]">
      <TitleBar />
      <MenuTabs />
      <Ribbon />
      <div className="flex min-h-0 flex-1">
        <ModelBrowser />
        <GraphicsWindow />
      </div>
      <div className="flex h-[29px] items-center justify-end bg-linear-to-b from-white to-[#b0b0b0] text-base text-black">
        <span className="w-12 text-center">1</span>
        <span className="flex h-full w-[38px] items-center border-l border-[#d5d5d5] pl-2.5">3</span>
      </div>
      <Taskbar />

      <button type="button" className="absolute top-0 left-0 flex h-[39px] w-[39px] items-center border-r border-b border-black bg-linear-to-b from-[#8b8b8b] to-[#bdbdbd]" aria-label="Inventor PRO">
        <Svg w={39} h={38}>
          <path d="M7 3h16v7h-4v12h4v6H7v-6h5V10H7z" fill="#e07b2c" stroke="#a8500f" strokeWidth=".6" />
          <path d="M12 10h4v12h-4z" fill="#9c4710" />
          <path d="M7 3h16l-4 5H11z" fill="#f09a4e" />
          <text x="11" y="36" fontFamily="Liberation Sans, sans-serif" fontWeight="700" fontSize="7" fill="#111">PRO</text>
          <path d="M30 17h7l-3.500 5z" fill="#222" />
        </Svg>
      </button>
    </div>
  );
}
